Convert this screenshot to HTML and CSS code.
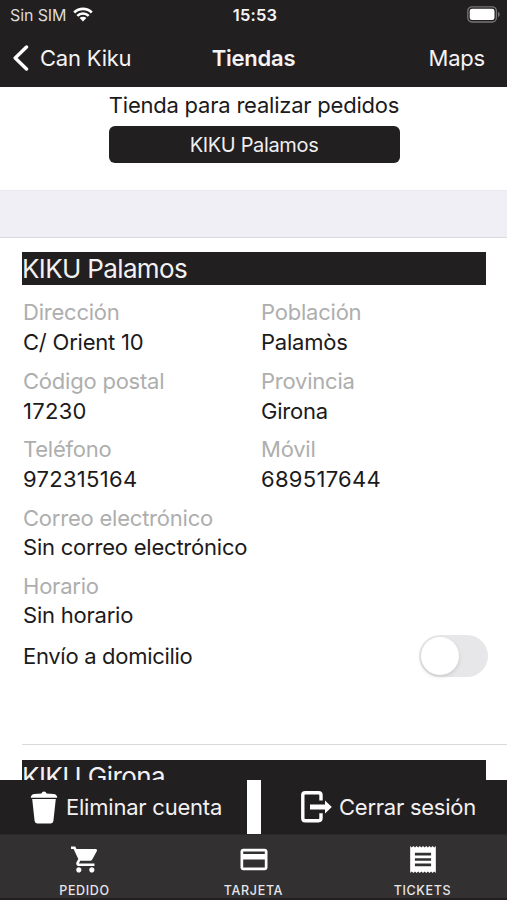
FILE: index.html
```html
<!DOCTYPE html>
<html lang="es">
<head>
<meta charset="utf-8">
<meta name="viewport" content="width=device-width, initial-scale=1">
<title>Tiendas</title>
<link rel="stylesheet" href="styles.css">
</head>
<body>
<div class="app">
  <header class="top">
    <div class="status">
      <div class="carrier"><span>Sin SIM</span>
        <svg class="wifi" viewBox="0 0 20 15"><path d="M1.2 5.5a12.5 12.5 0 0 1 17.6 0M4.3 8.8a8.1 8.1 0 0 1 11.4 0" fill="none" stroke="#fff" stroke-width="2.6"/><path d="M6.6 11.1a4.8 4.8 0 0 1 6.8 0L10 14.6z" fill="#fff"/></svg>
      </div>
      <span class="clock">15:53</span>
      <svg class="battery" viewBox="0 0 33 17"><rect x=".8" y=".8" width="28.6" height="15.2" rx="4.2" fill="none" stroke="#777576" stroke-width="1.3"/><rect x="2.7" y="2.7" width="24.8" height="11.4" rx="2.4" fill="#fff"/><path d="M31 5.8q1.7.8 1.7 2.7T31 11.2z" fill="#777576"/></svg>
    </div>
    <nav class="navbar">
      <div class="back"><svg viewBox="0 0 17 26"><path d="M14.5 2 3.2 13l11.3 11" fill="none" stroke="#fff" stroke-width="3.4" stroke-linecap="round" stroke-linejoin="round"/></svg><span>Can Kiku</span></div>
      <h1>Tiendas</h1>
      <span class="maps">Maps</span>
    </nav>
  </header>
  <section class="picker">
    <p>Tienda para realizar pedidos</p>
    <button type="button">KIKU Palamos</button>
  </section>
  <div class="band"></div>
  <main class="list">
    <article class="store">
      <h2>KIKU Palamos</h2>
      <dl class="fields">
        <div><dt>Dirección</dt><dd>C/ Orient 10</dd></div>
        <div><dt>Población</dt><dd>Palamòs</dd></div>
        <div><dt>Código postal</dt><dd class="num">17230</dd></div>
        <div><dt>Provincia</dt><dd>Girona</dd></div>
        <div><dt>Teléfono</dt><dd class="num">972315164</dd></div>
        <div><dt>Móvil</dt><dd class="num">689517644</dd></div>
        <div class="wide"><dt>Correo electrónico</dt><dd>Sin correo electrónico</dd></div>
        <div class="wide"><dt>Horario</dt><dd>Sin horario</dd></div>
      </dl>
      <div class="delivery"><span>Envío a domicilio</span><span class="switch"><span class="knob"></span></span></div>
    </article>
    <article class="store next"><h2>KIKU Girona</h2></article>
  </main>
  <div class="actions">
    <div class="action remove"><svg viewBox="0 0 28 33"><path d="M.8 6.800Q.8 3.200 4.500 2.900L11.500 2.400Q12 .6 14 .6t2.500 1.800l7 .5q3.700.300 3.700 3.900zM2.200 8h23.600L23.400 30q-.3 2.400-2.600 2.400H7.200Q4.900 32.400 4.600 30z" fill="#fff"/></svg><span>Eliminar cuenta</span></div>
    <div class="action logout"><svg viewBox="0 0 31 32"><path d="M20 9.600V4.200Q20 1.800 17.600 1.800H4.200Q1.800 1.800 1.800 4.200v23Q1.800 29.700 4.200 29.700h13.400q2.400 0 2.400-2.400v-5" fill="none" stroke="#fff" stroke-width="3.400"/><path d="M9 13.500h15V9.600l6.800 6.400-6.800 6.400v-3.900H9z" fill="#fff"/></svg><span>Cerrar sesión</span></div>
  </div>
  <footer class="tabs">
    <div class="tab"><svg viewBox="1 2 21.500 20"><path d="M7 18c-1.100 0-1.990.9-1.990 2S5.900 22 7 22s2-.9 2-2-.9-2-2-2zM1 2v2h2l3.600 7.590-1.350 2.450c-.16.280-.25.610-.25.960 0 1.100.9 2 2 2h12v-2H7.420c-.14 0-.25-.110-.25-.250l.030-.120.900-1.630h7.450c.75 0 1.410-.410 1.750-1.030l3.580-6.490A1 1 0 0 0 20 4H5.210l-.94-2zm16 16c-1.100 0-1.990.9-1.990 2s.89 2 1.990 2 2-.9 2-2-.9-2-2-2z" fill="#fff"/></svg><span>PEDIDO</span></div>
    <div class="tab"><svg viewBox="2 2 20 20"><path d="M20 4H4c-1.110 0-1.990.890-1.990 2L2 18c0 1.110.890 2 2 2h16c1.110 0 2-.890 2-2V6c0-1.110-.890-2-2-2zm0 14H4v-6h16zm0-10H4V6h16z" fill="#fff"/></svg><span>TARJETA</span></div>
    <div class="tab"><svg viewBox="2 2 20 20"><path d="M18 17H6v-2h12zm0-4H6v-2h12zm0-4H6V7h12zM2.500 22l1.190-1.200L4.880 22l1.190-1.200L7.250 22l1.190-1.200L9.630 22l1.190-1.200L12 22l1.190-1.200L14.380 22l1.190-1.200L16.750 22l1.190-1.200L19.130 22l1.190-1.200L21.500 22V2l-1.180 1.200L19.130 2l-1.190 1.200L16.750 2l-1.180 1.200L14.380 2l-1.190 1.200L12 2l-1.180 1.200L9.630 2 8.440 3.200 7.250 2 6.070 3.200 4.880 2 3.690 3.200 2.500 2z" fill="#fff"/></svg><span>TICKETS</span></div>
  </footer>
</div>
</body>
</html>
```

FILE: styles.css
```css
* { box-sizing: border-box; }
body { margin: 0; background: #fff; color: #1c1a1b; font-family: Inter, "Liberation Sans", sans-serif; font-size: 22px; letter-spacing: -.22px; }
h1, h2, p, dl, dd { margin: 0; font-weight: 400; }
svg { display: block; flex: none; }
.app { width: 507px; height: 900px; display: flex; flex-direction: column; overflow: hidden; }
.top { height: 87px; flex: none; background: #221f20; color: #f5f3f4; }
.status { height: 29px; display: grid; grid-template-columns: 1fr auto 1fr; align-items: center; padding: 0 7px 0 10px; font-size: 16px; }
.carrier { display: flex; align-items: center; gap: 7px; color: #dcdadb; letter-spacing: -.1px; }
.wifi { width: 20px; height: 15px; }
.clock { font-weight: 600; font-size: 16.5px; letter-spacing: .2px; }
.battery { width: 33px; height: 17px; justify-self: end; }
.navbar { height: 57px; display: grid; grid-template-columns: 1fr auto 1fr; align-items: center; padding: 0 22px 0 12px; }
.back { display: flex; align-items: center; gap: 11px; }
.back svg { width: 17px; height: 26px; }
.navbar h1 { font-size: 22px; font-weight: 600; margin-left: 10px; }
.maps { justify-self: end; }
.picker { height: 103px; flex: none; display: flex; flex-direction: column; align-items: center; padding-left: 1px; }
.picker p { line-height: 30px; margin-top: 3px; height: 35px; }
.picker button { width: 291px; height: 37px; margin-top: 1px; border: 0; border-radius: 6px; background: #221f20; color: #f0eeef; font: inherit; font-size: 20px; letter-spacing: -.35px; padding: 0; }
.band { height: 48px; flex: none; background: #f0eff5; border-top: 1px solid #eaeaee; border-bottom: 1px solid #d9d9dd; }
.list { flex: 1; min-height: 0; overflow: hidden; padding-left: 22px; }
.store { height: 507px; padding-top: 14px; border-bottom: 1px solid #d9d9dc; }
.store h2 { width: 463.5px; height: 33px; line-height: 34px; background: #221f20; color: #f3f1f2; font-size: 26px; letter-spacing: -.65px; }
.next { border: 0; padding-top: 15px; }
.next h2 { letter-spacing: -.55px; }
.fields { display: grid; grid-template-columns: 238px 1fr; grid-auto-rows: 68.6px; padding: 12px 0 0 1px; line-height: 30px; }
.fields dt { color: #aeaeae; }
.fields .num { letter-spacing: .3px; }
.wide { grid-column: 1 / -1; }
.wide dd { margin-top: -1px; }
.delivery { display: flex; justify-content: space-between; align-items: center; height: 44px; padding: 0 19px 0 1px; margin-top: -6px; letter-spacing: -.3px; }
.switch { width: 69px; height: 42px; border-radius: 21px; background: #e7e7e9; padding: 2px; }
.knob { display: block; width: 38px; height: 38px; border-radius: 50%; background: #fff; box-shadow: 0 2px 4px rgba(0,0,0,.12); }
.actions { height: 54px; flex: none; display: flex; justify-content: space-between; }
.action { display: flex; align-items: center; background: #221f20; color: #f3f1f2; }
.remove { width: 247px; padding-left: 30px; gap: 8px; }
.remove svg { width: 28px; height: 33px; }
.logout { width: 246px; padding-left: 40px; gap: 7px; letter-spacing: -.25px; }
.logout svg { width: 31px; height: 32px; }
.tabs { height: 66px; flex: none; display: grid; grid-template-columns: repeat(3, 1fr); background: #323031; border-top: 1px solid #2b292a; border-bottom: 2px solid #221f20; color: #e8e6e7; }
.tab { display: flex; flex-direction: column; align-items: center; padding-top: 11px; font-size: 12.5px; line-height: 16px; letter-spacing: .65px; font-weight: 500; }
.tab svg { width: 28px; height: 27px; margin-bottom: 10px; }
```
